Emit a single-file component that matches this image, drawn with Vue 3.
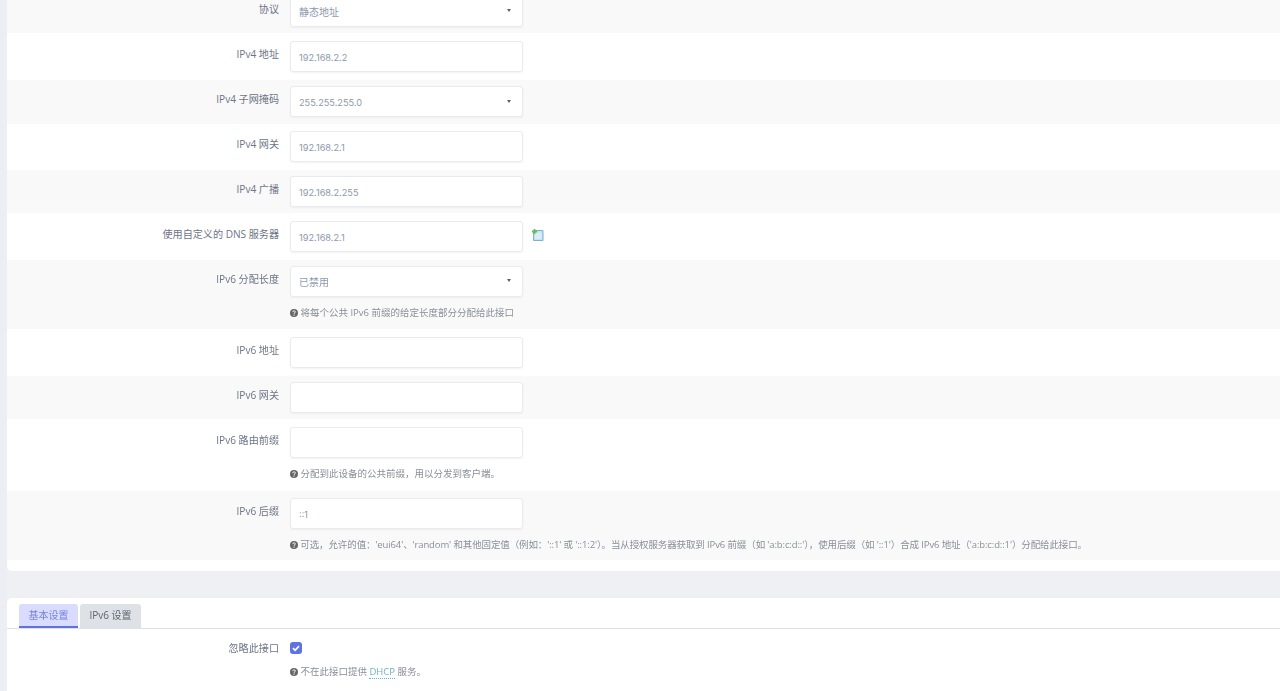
<script setup>
const rows = [
  { label: '协议', value: '静态地址', cjk: true, select: true, h: 43, pt: 6 },
  { label: 'IPv4 地址', value: '192.168.2.2', h: 47, pt: 8 },
  { label: 'IPv4 子网掩码', value: '255.255.255.0', select: true, h: 44, pt: 6 },
  { label: 'IPv4 网关', value: '192.168.2.1', h: 46, pt: 7 },
  { label: 'IPv4 广播', value: '192.168.2.255', h: 43, pt: 6 },
  { label: '使用自定义的 DNS 服务器', value: '192.168.2.1', add: true, h: 47, pt: 8 },
  { label: 'IPv6 分配长度', value: '已禁用', cjk: true, select: true, h: 69, pt: 6, help: '将每个公共 IPv6 前缀的给定长度部分分配给此接口' },
  { label: 'IPv6 地址', value: '', h: 47, pt: 8 },
  { label: 'IPv6 网关', value: '', h: 43, pt: 6 },
  { label: 'IPv6 路由前缀', value: '', h: 72, pt: 8, help: '分配到此设备的公共前缀，用以分发到客户端。' },
  { label: 'IPv6 后缀', value: '::1', h: 69, pt: 7, tight: true, help: "可选，允许的值：'eui64'、'random' 和其他固定值（例如：'::1' 或 '::1:2'）。当从授权服务器获取到 IPv6 前缀（如 'a:b:c:d::'），使用后缀（如 '::1'）合成 IPv6 地址（'a:b:c:d::1'）分配给此接口。" },
]
</script>

<template>
  <div class="page">
    <div class="shift">
      <section class="card first">
        <div
          v-for="(row, i) in rows"
          :key="row.label"
          class="row"
          :class="{ striped: i % 2 === 0 }"
          :style="{ height: row.h + 'px', paddingTop: row.pt + 'px' }"
        >
          <div class="label">{{ row.label }}</div>
          <div class="control">
            <div class="line">
              <div class="field" :class="{ cjk: row.cjk }">
                <span>{{ row.value }}</span>
                <i v-if="row.select" class="caret"></i>
              </div>
              <svg v-if="row.add" class="add" viewBox="0 0 12 12" width="12" height="12">
                <path d="M3 1.5h8v10H1.5V3z" fill="#c4e0f3" stroke="#7fb0cf" stroke-width="1" />
                <path d="M3 3.5h6.5v6.5H3z" fill="#d9ecf8" />
                <path d="M2.5 0v5M0 2.5h5" stroke="#5fc04f" stroke-width="1.8" />
              </svg>
            </div>
            <p v-if="row.help" class="help" :class="{ tight: row.tight }">
              <svg class="q" viewBox="0 0 10 10" width="8" height="8">
                <circle cx="5" cy="5" r="5" fill="#666" />
                <path d="M3.4 3.9c0-2.1 3.3-2.1 3.3-.2 0 1.2-1.7 1.2-1.7 2.4" fill="none" stroke="#fff" stroke-width="1.2" />
                <rect x="4.3" y="6.9" width="1.4" height="1.4" fill="#fff" />
              </svg>
              {{ row.help }}
            </p>
          </div>
        </div>
      </section>

      <section class="card second">
        <div class="tabs">
          <div class="tab active">基本设置</div>
          <div class="tab">IPv6 设置</div>
        </div>
        <div class="row ignore">
          <div class="label">忽略此接口</div>
          <div class="control">
            <div class="check">
              <svg viewBox="0 0 12 12" width="12" height="12">
                <path d="M3 6.2l2.1 2.1L9 4.2" fill="none" stroke="#fff" stroke-width="1.7" />
              </svg>
            </div>
            <p class="help help-check">
              <svg class="q" viewBox="0 0 10 10" width="8" height="8">
                <circle cx="5" cy="5" r="5" fill="#666" />
                <path d="M3.4 3.9c0-2.1 3.3-2.1 3.3-.2 0 1.2-1.7 1.2-1.7 2.4" fill="none" stroke="#fff" stroke-width="1.2" />
                <rect x="4.3" y="6.9" width="1.4" height="1.4" fill="#fff" />
              </svg>
              不在此接口提供 <a class="link">DHCP</a> 服务。
            </p>
          </div>
        </div>
      </section>
    </div>
  </div>
</template>

<style>
html, body { margin: 0; overflow: hidden; }
</style>

<style scoped>
.page {
  height: 691px;
  overflow: hidden;
  box-sizing: border-box;
  padding-left: 7px;
  background: #eff0f4;
  font-family: "Open Sans", "Noto Sans CJK SC", sans-serif;
  font-size: 10px;
  color: #6b7280;
  box-shadow: inset 7px 0 0 #eceef3;
}
.shift { margin-top: -10px; filter: blur(0.4px); }
.card { background: #fff; }
.first {
  height: 581px;
  border-radius: 0 0 0 5px;
  box-sizing: border-box;
}
.second {
  margin-top: 27px;
  border-radius: 5px 0 0 0;
  padding-top: 6px;
  height: 200px;
}
.row { display: flex; box-sizing: border-box; }
.striped { background: #f9f9f9; }
.label {
  width: 272px;
  flex: none;
  text-align: right;
  line-height: 26px;
  color: #6d7486;
  font-size: 10.1px;
}
.control { margin-left: 11px; width: 233px; flex: none; }
.line { display: flex; align-items: center; gap: 9px; }
.field {
  width: 233px;
  height: 31px;
  flex: none;
  box-sizing: border-box;
  display: flex;
  align-items: center;
  justify-content: space-between;
  padding: 1px 11px 0 8px;
  background: #fff;
  border: 1px solid #e9ebef;
  border-radius: 3px;
  box-shadow: 0 1px 2px rgba(50, 50, 93, .06);
  font-family: Inter, "Noto Sans CJK SC", sans-serif;
  font-size: 9.2px;
  color: #8d99ab;
}
.field.cjk { font-size: 10px; padding-top: 0; padding-bottom: 1px; }
.caret {
  width: 0;
  height: 0;
  margin-top: -1px;
  border-left: 2.5px solid transparent;
  border-right: 2.5px solid transparent;
  border-top: 3px solid #5c6168;
}
.add { flex: none; margin-top: -4px; }
.help {
  margin: 9px 0 0;
  line-height: 14px;
  white-space: nowrap;
  font-size: 9.5px;
  color: #8a8f98;
}
.help.tight { letter-spacing: -0.12px; }
.q { vertical-align: -1px; }
.tabs {
  display: flex;
  gap: 2px;
  height: 25px;
  box-sizing: border-box;
  padding-left: 12px;
  border-bottom: 1px solid #dee2e6;
}
.tab {
  width: 61px;
  height: 24px;
  box-sizing: border-box;
  border-radius: 3px 3px 0 0;
  background: #dee2e6;
  color: #5f6672;
  line-height: 23px;
  text-align: center;
}
.tab.active {
  width: 59px;
  background: #d9dcfd;
  color: #7483e6;
  border-bottom: 2px solid #5e72e4;
}
.ignore { padding-top: 13px; }
.ignore .label { line-height: 13px; }
.check {
  width: 12px;
  height: 12px;
  background: #5e72e4;
  border-radius: 3px;
}
.help-check { margin-top: 11px; }
.link {
  color: #6fb1c9;
  border-bottom: 1px dotted #6fb1c9;
}
</style>
